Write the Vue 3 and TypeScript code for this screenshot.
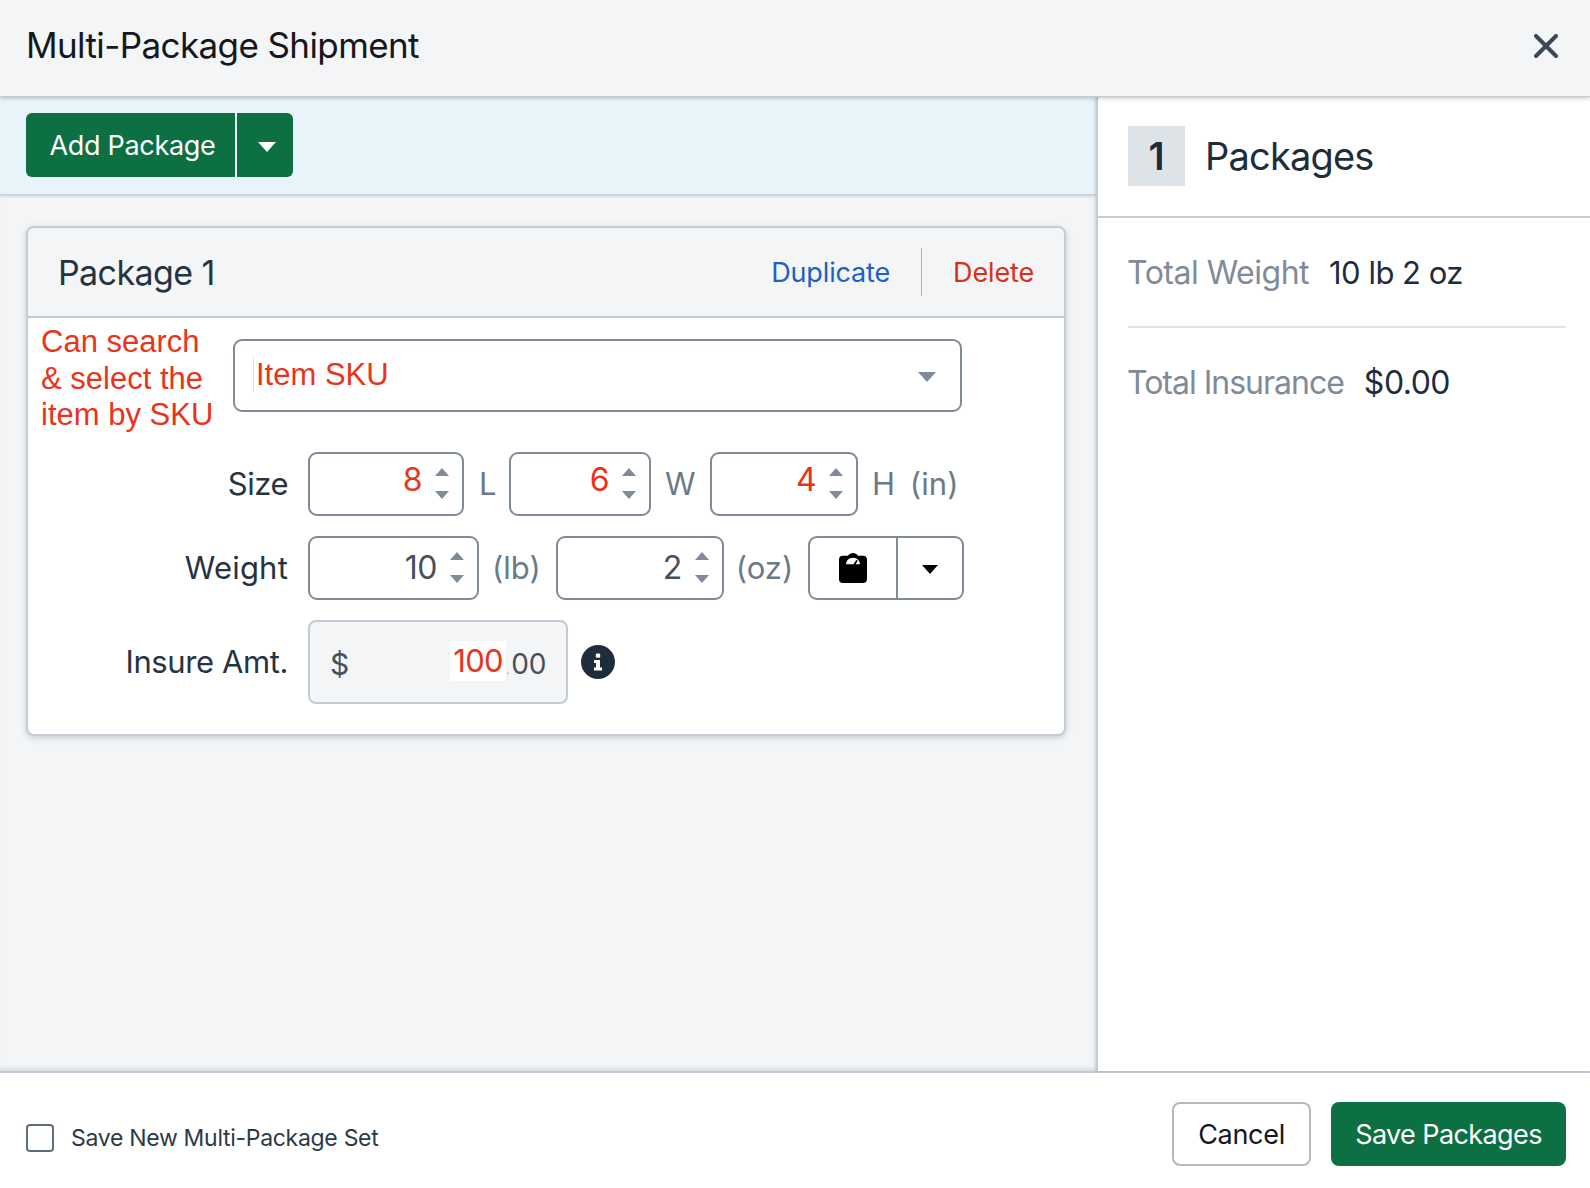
<template>
  <div class="dialog">
    <header class="dialog-header">
      <h1>Multi-Package Shipment</h1>
      <button class="close-btn" type="button" aria-label="Close">
        <svg width="24" height="24" viewBox="0 0 24 24">
          <path d="M2 2 L22 22 M22 2 L2 22" stroke="#3c4855" stroke-width="4" stroke-linecap="round" fill="none" />
        </svg>
      </button>
    </header>

    <div class="dialog-main">
      <section class="left-pane">
        <div class="toolbar">
          <div class="split-btn">
            <button class="green-btn add-btn" type="button">Add Package</button>
            <button class="green-btn caret-btn" type="button" aria-label="More">
              <span class="caret white"></span>
            </button>
          </div>
        </div>

        <div class="package-card">
          <div class="card-head">
            <h2>Package 1</h2>
            <div class="card-actions">
              <a class="link-blue">Duplicate</a>
              <span class="action-sep"></span>
              <a class="link-red">Delete</a>
            </div>
          </div>

          <div class="card-body">
            <div class="sku-row">
              <p class="note">Can search<br />&amp; select the<br />item by SKU</p>
              <div class="sku-select">
                <span class="sku-text">Item SKU</span>
                <span class="caret grey"></span>
              </div>
            </div>

            <div class="form-row size-row">
              <label>Size</label>
              <div class="num-input w-l">
                <span class="num red">8</span>
                <span class="spin"><i class="up"></i><i class="down"></i></span>
              </div>
              <span class="unit unit-l">L</span>
              <div class="num-input w-w">
                <span class="num red">6</span>
                <span class="spin"><i class="up"></i><i class="down"></i></span>
              </div>
              <span class="unit unit-w">W</span>
              <div class="num-input w-h">
                <span class="num red">4</span>
                <span class="spin"><i class="up"></i><i class="down"></i></span>
              </div>
              <span class="unit unit-w">H</span>
              <span class="unit in">(in)</span>
            </div>

            <div class="form-row weight-row">
              <label>Weight</label>
              <div class="num-input w-lb">
                <span class="num">10</span>
                <span class="spin"><i class="up"></i><i class="down"></i></span>
              </div>
              <span class="unit paren lb">(lb)</span>
              <div class="num-input w-oz">
                <span class="num">2</span>
                <span class="spin"><i class="up"></i><i class="down"></i></span>
              </div>
              <span class="unit paren oz">(oz)</span>
              <div class="scale-btn">
                <span class="scale-main">
                  <svg width="28" height="30" viewBox="0 0 30 32">
                    <path
                      fill="#000"
                      fill-rule="evenodd"
                      d="M4 3 H9.500 C11 1 13 0 15 0 C17 0 19 1 20.500 3 H26 C28.500 3 30 4.500 30 7 V28 C30 30.500 28.500 32 26 32 H4 C1.500 32 0 30.500 0 28 V7 C0 4.500 1.500 3 4 3 Z M7.500 12 C7.500 8 11 5 15 5 C19 5 22.500 8 22.500 12 H18 L20 8 L18.500 7.500 L15.500 12 Z"
                    />
                  </svg>
                </span>
                <span class="scale-caret"><span class="caret black"></span></span>
              </div>
            </div>

            <div class="form-row insure-row">
              <label>Insure Amt.</label>
              <div class="money-input">
                <span class="dollar">$</span>
                <span class="money-val"><span class="patch">100</span><span class="cents"><span class="dot">.</span>00</span></span>
              </div>
              <svg class="info" width="34" height="34" viewBox="0 0 34 34">
                <circle cx="17" cy="17" r="17" fill="#1f2d3a" />
                <rect x="14.800" y="8.500" width="4.400" height="4.200" rx="1.200" fill="#fff" />
                <path d="M13 15 H19 V22.500 H21 V25.500 H13 V22.500 H15 V18 H13 Z" fill="#fff" />
              </svg>
            </div>
          </div>
        </div>
      </section>

      <aside class="right-pane">
        <div class="summary-head">
          <span class="count">1</span>
          <span class="summary-title">Packages</span>
        </div>
        <div class="summary-body">
          <div class="stat first">
            <span class="stat-label">Total Weight</span>
            <span class="stat-value weight-val">10 lb 2 oz</span>
          </div>
          <div class="stat second">
            <span class="stat-label tight">Total Insurance</span>
            <span class="stat-value">$0.00</span>
          </div>
        </div>
      </aside>
    </div>

    <footer class="dialog-footer">
      <label class="save-set">
        <span class="checkbox"></span>
        <span>Save New Multi-Package Set</span>
      </label>
      <div class="footer-actions">
        <button class="cancel-btn" type="button">Cancel</button>
        <button class="green-btn save-btn" type="button">Save Packages</button>
      </div>
    </footer>
  </div>
</template>

<script setup lang="ts">
// static mock of the multi package dialog, nothing to wire up
</script>

<style>
html,
body {
  margin: 0;
  background: #fff;
}
</style>

<style scoped>
.dialog {
  display: flex;
  flex-direction: column;
  height: 1188px;
  width: 1590px;
  overflow: hidden;
  font-family: Inter, "Noto Sans", sans-serif;
  color: #1f2d3a;
  background: #fff;
}

/* Header */
.dialog-header {
  height: 97px;
  flex: none;
  box-sizing: border-box;
  display: flex;
  align-items: center;
  justify-content: space-between;
  padding: 0 32px 4px 26px;
  background: #f3f5f7;
  border-bottom: 1px solid #c6ccd2;
  box-shadow: 0 1px 4px rgba(60, 70, 80, 0.35);
  position: relative;
  z-index: 3;
}

.dialog-header h1 {
  margin: 0 0 2px;
  font-size: 35px;
  font-weight: 400;
  letter-spacing: -0.6px;
  color: #14181d;
}

.close-btn {
  border: none;
  background: none;
  padding: 0;
  display: flex;
}

/* Panes */
.dialog-main {
  flex: 1;
  display: flex;
  min-height: 0;
}

.left-pane {
  width: 1096px;
  flex: none;
  background: #f3f5f7;
  box-shadow: inset 0 -6px 6px -6px rgba(90, 100, 110, 0.35);
}

.toolbar {
  height: 98px;
  box-sizing: border-box;
  padding-top: 16px;
  padding-left: 26px;
  background: #e8f4fa;
  border-bottom: 1px solid #c9d2da;
  box-shadow: 0 1px 3px rgba(60, 70, 80, 0.25);
}

.split-btn {
  display: flex;
  gap: 2px;
}

.green-btn {
  border: none;
  background: #0d7042;
  color: #fff;
  font-family: inherit;
  font-size: 27px;
  letter-spacing: -0.3px;
}

.add-btn {
  width: 209px;
  height: 64px;
  padding: 0 0 0 4px;
  border-radius: 6px 0 0 6px;
}

.caret-btn {
  width: 56px;
  height: 64px;
  padding: 4px 0 0 3px;
  border-radius: 0 6px 6px 0;
  display: flex;
  align-items: center;
  justify-content: center;
}

.caret {
  display: inline-block;
  width: 0;
  height: 0;
  border-left: 9px solid transparent;
  border-right: 9px solid transparent;
  border-top: 10px solid #000;
}

.caret.white {
  border-top-color: #fff;
}

.caret.grey {
  border-top-color: #7f8b98;
  margin-top: 4px;
}

.caret.black {
  border-left-width: 8px;
  border-right-width: 8px;
  border-top-width: 9px;
  margin-top: 3px;
}

/* Card */
.package-card {
  margin: 31px 30px 0 26px;
  background: #fff;
  border: 2px solid #c3ccd6;
  border-radius: 8px;
  box-shadow: 0 2px 6px rgba(60, 70, 80, 0.22);
  overflow: hidden;
}

.card-head {
  height: 90px;
  box-sizing: border-box;
  display: flex;
  align-items: center;
  justify-content: space-between;
  padding: 0 30px 0 30px;
  background: #f3f5f7;
  border-bottom: 2px solid #c3ccd6;
}

.card-head h2 {
  margin: 0;
  font-size: 34px;
  font-weight: 400;
  letter-spacing: -0.6px;
  color: #263441;
}

.card-actions {
  display: flex;
  align-items: center;
  font-size: 27px;
  letter-spacing: -0.15px;
}

.link-blue {
  color: #1f5fc4;
}

.link-red {
  color: #d9301a;
}

.action-sep {
  width: 1px;
  height: 48px;
  margin: 0 31px;
  background: #aab4be;
}

.card-body {
  padding: 6px 0 30px;
}

.sku-row {
  display: flex;
  align-items: flex-start;
}

.note {
  margin: 0 0 0 13px;
  width: 192px;
  font-family: "Liberation Sans", Arial, sans-serif;
  font-size: 31px;
  line-height: 36.500px;
  color: #e8341a;
}

.sku-select {
  width: 729px;
  height: 73px;
  box-sizing: border-box;
  margin-top: 15px;
  display: flex;
  align-items: center;
  justify-content: space-between;
  padding: 0 24px 2px 18px;
  border: 2px solid #7f8b98;
  border-radius: 9px;
  font-family: "Liberation Sans", Arial, sans-serif;
  font-size: 31px;
  color: #e8341a;
}

.sku-text {
  border-left: 1px solid #dfe2e5;
  padding-left: 2px;
}

/* Form rows */
.form-row {
  display: flex;
  align-items: center;
  font-size: 31px;
}

.form-row label {
  width: 260px;
  flex: none;
  margin-right: 20px;
  text-align: right;
  letter-spacing: -0.5px;
  color: #263441;
}

.size-row {
  margin-top: 18px;
}

.weight-row {
  margin-top: 20px;
}

.weight-row label {
  letter-spacing: 0.2px;
}

.insure-row {
  margin-top: 20px;
}

.insure-row label {
  letter-spacing: -0.4px;
}

.num-input {
  height: 64px;
  box-sizing: border-box;
  display: flex;
  align-items: center;
  justify-content: flex-end;
  gap: 13px;
  padding-right: 13px;
  border: 2px solid #7f8b98;
  border-radius: 9px;
  background: #fff;
}

.w-l {
  width: 156px;
}

.w-w {
  width: 142px;
}

.w-h {
  width: 148px;
}

.w-lb {
  width: 171px;
}

.w-oz {
  width: 168px;
}

.num {
  font-size: 32px;
  letter-spacing: -0.5px;
  color: #46505a;
}

.num.red {
  color: #e8341a;
  margin-bottom: 8px;
}

.spin {
  display: flex;
  flex-direction: column;
  gap: 15px;
}

.spin i {
  display: block;
  width: 0;
  height: 0;
  border-left: 7px solid transparent;
  border-right: 7px solid transparent;
}

.spin .up {
  border-bottom: 8px solid #7f8b98;
}

.spin .down {
  border-top: 8px solid #7f8b98;
}

.unit {
  margin: 0 15px;
  color: #6b7a89;
  letter-spacing: -0.5px;
}

.unit-l {
  margin-right: 13px;
}

.unit-w {
  margin-left: 14px;
}

.unit.in {
  margin-left: 0;
  letter-spacing: 0.2px;
}

.unit.paren {
  letter-spacing: 0;
}

.unit.lb {
  margin-left: 13px;
}

.unit.oz {
  margin-left: 12px;
  margin-right: 15px;
}

.scale-btn {
  width: 156px;
  height: 64px;
  box-sizing: border-box;
  display: flex;
  border: 2px solid #7f8b98;
  border-radius: 9px;
}

.scale-main {
  width: 86px;
  display: flex;
  align-items: center;
  justify-content: center;
  border-right: 2px solid #7f8b98;
}

.scale-caret {
  flex: 1;
  display: flex;
  align-items: center;
  justify-content: center;
}

.money-input {
  width: 260px;
  height: 84px;
  box-sizing: border-box;
  display: flex;
  align-items: center;
  justify-content: space-between;
  padding: 0 20px 0 20px;
  background: #f3f5f7;
  border: 2px solid #c3ccd6;
  border-radius: 8px;
  color: #46505a;
  font-size: 30px;
}

.dollar {
  margin-top: 4px;
}

.money-val {
  display: flex;
  align-items: center;
}

.patch {
  background: #fff;
  color: #e8341a;
  font-size: 31px;
  letter-spacing: -0.6px;
  line-height: 40px;
  padding: 0 3px 0 3px;
  margin-bottom: 2px;
}

.cents {
  font-size: 28px;
  letter-spacing: -0.3px;
  margin-top: 4px;
}

.dot {
  font-size: 12px;
  color: #98a2ac;
  margin-right: 2px;
}

.info {
  margin-left: 13px;
}

/* Right pane */
.right-pane {
  flex: 1;
  box-sizing: border-box;
  border-left: 2px solid #c3ccd6;
  background: #fff;
  box-shadow: -1px 0 3px rgba(90, 100, 110, 0.25);
  position: relative;
}

.summary-head {
  height: 121px;
  box-sizing: border-box;
  display: flex;
  align-items: center;
  padding: 0 30px 2px;
  border-bottom: 2px solid #c3ccd6;
}

.count {
  width: 57px;
  height: 60px;
  display: flex;
  align-items: center;
  justify-content: center;
  background: #dee3e8;
  font-size: 38px;
  font-weight: 600;
}

.summary-title {
  margin-left: 20px;
  font-size: 38px;
  letter-spacing: -0.8px;
}

.summary-body {
  padding: 0 24px 0 30px;
}

.stat {
  height: 110px;
  box-sizing: border-box;
  display: flex;
  align-items: center;
  gap: 20px;
  font-size: 32px;
  letter-spacing: -0.5px;
}

.stat.first {
  border-bottom: 2px solid #e0e4e8;
}

.stat.second {
  height: 109px;
}

.stat-label {
  color: #7f8b98;
  margin-left: -1px;
}

.stat-label.tight {
  letter-spacing: -1px;
}

.weight-val {
  font-size: 31px;
}

/* Footer */
.dialog-footer {
  height: 117px;
  flex: none;
  box-sizing: border-box;
  display: flex;
  align-items: center;
  justify-content: space-between;
  padding: 7px 24px 0 26px;
  background: #fff;
  border-top: 2px solid #c3ccd6;
}

.save-set {
  display: flex;
  align-items: center;
  gap: 17px;
  font-size: 23px;
  letter-spacing: -0.3px;
  color: #2c3a47;
  margin-top: 7px;
}

.checkbox {
  width: 28px;
  height: 28px;
  box-sizing: border-box;
  border: 2px solid #5f6e7d;
  border-radius: 4px;
}

.footer-actions {
  display: flex;
  gap: 20px;
}

.cancel-btn {
  width: 139px;
  height: 64px;
  background: #fff;
  border: 2px solid #b5b9bd;
  border-radius: 8px;
  font-family: inherit;
  font-size: 27px;
  letter-spacing: -0.3px;
  color: #14181d;
}

.save-btn {
  width: 235px;
  height: 64px;
  border-radius: 8px;
  letter-spacing: -0.6px;
}
</style>
